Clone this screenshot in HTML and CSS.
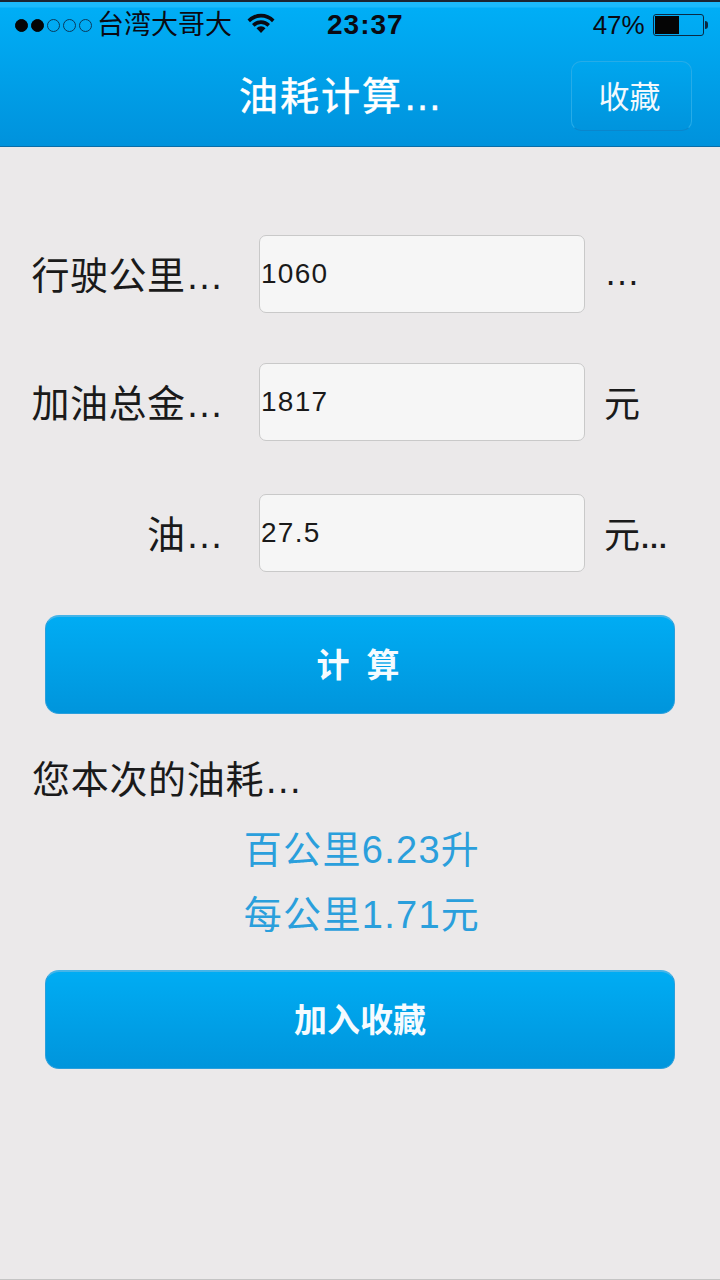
FILE: index.html
```html
<!DOCTYPE html>
<html lang="zh-CN">

<head>
    <meta charset="UTF-8">
    <meta name="viewport" content="width=device-width, initial-scale=1.0">
    <title>油耗计算</title>
    <link rel="stylesheet" href="styles.css">
</head>

<body>
    <header class="top-bar">
        <div class="status-bar">
            <div class="signal">
                <span class="dot full"></span>
                <span class="dot full"></span>
                <span class="dot"></span>
                <span class="dot"></span>
                <span class="dot"></span>
            </div>
            <span class="carrier">台湾大哥大</span>
            <svg class="wifi" width="28" height="20" viewBox="0 0 28 20">
                <path d="M0.5 6.5 A19 19 0 0 1 27.5 6.5 L25 9.2 A15.5 15.5 0 0 0 3 9.2 Z" fill="#0a0a12"/>
                <path d="M5 11 A12.5 12.5 0 0 1 23 11 L20.5 13.7 A9 9 0 0 0 7.5 13.7 Z" fill="#0a0a12"/>
                <path d="M9.5 15.2 A6.2 6.2 0 0 1 18.5 15.2 L14 20 Z" fill="#0a0a12"/>
            </svg>
            <span class="clock">23:37</span>
            <span class="percent">47%</span>
            <div class="battery"><div class="battery-level"></div></div>
            <div class="battery-tip"></div>
        </div>
        <div class="nav-bar">
            <h1 class="nav-title">油耗计算…</h1>
            <button class="fav-btn">收藏</button>
        </div>
    </header>

    <main class="content">
        <div class="form-row">
            <label class="row-label" for="distance">行驶公里…</label>
            <input class="row-input" id="distance" type="text" value="1060">
            <span class="row-unit">…</span>
        </div>
        <div class="form-row">
            <label class="row-label" for="total">加油总金…</label>
            <input class="row-input" id="total" type="text" value="1817">
            <span class="row-unit">元</span>
        </div>
        <div class="form-row last-row">
            <label class="row-label" for="price">油…</label>
            <input class="row-input" id="price" type="text" value="27.5">
            <span class="row-unit">元<span class="small-dots">…</span></span>
        </div>

        <button class="big-btn calc-btn">计 算</button>

        <div class="result-title">您本次的油耗…</div>
        <div class="result-line first-line">百公里6.23升</div>
        <div class="result-line">每公里1.71元</div>

        <button class="big-btn save-btn">加入收藏</button>
    </main>
</body>

</html>
```

FILE: styles.css
```css
body {
    font-family: "Liberation Sans", "Noto Sans CJK SC", sans-serif;
    background-color: #ebe9ea;
    margin: 0;
    height: 1280px;
    overflow: hidden;
    border-bottom: 1px solid #c4c4c4;
    box-sizing: border-box;
}
.top-bar {
    height: 147px;
    box-sizing: border-box;
    border-top: 2px solid #1c2530;
    border-bottom: 1px solid #0a6da8;
    background: linear-gradient(#1cbafa 0, #1cbafa 5px, #00aef6 6px, #0092dc 100%);
}
.status-bar {
    display: flex;
    align-items: center;
    height: 46px;
    padding-left: 15px;
    color: #0a0a12;
}
.signal {
    display: flex;
    gap: 3px;
}
.dot {
    width: 13px;
    height: 13px;
    box-sizing: border-box;
    border: 1px solid #0a3a5c;
    border-radius: 50%;
}
.dot.full {
    background-color: #050505;
    border-color: #050505;
}
.carrier {
    margin-left: 5px;
    font-size: 27px;
    line-height: 46px;
}
.wifi {
    margin-left: 15px;
    margin-bottom: 4px;
}
.clock {
    margin-left: 52px;
    font-size: 28px;
    font-weight: bold;
    letter-spacing: 1px;
}
.percent {
    margin-left: 189px;
    font-size: 26px;
}
.battery {
    margin-left: 8px;
    width: 51px;
    height: 22px;
    box-sizing: border-box;
    border: 1px solid #0a2a44;
    border-radius: 3px;
    padding: 1px;
}
.battery-level {
    width: 24px;
    height: 100%;
    background-color: #050505;
}
.battery-tip {
    width: 3px;
    height: 8px;
    margin-left: 1px;
    background-color: #0a2a44;
    border-radius: 0 3px 3px 0;
}
.nav-bar {
    display: flex;
    align-items: center;
    height: 98px;
    padding-left: 239px;
    padding-right: 28px;
}
.nav-title {
    margin: 0 auto 8px 0;
    font-size: 39px;
    font-weight: normal;
    letter-spacing: 2px;
    color: #ffffff;
    -webkit-text-stroke: 0.5px #ffffff;
}
.fav-btn {
    width: 121px;
    height: 70px;
    margin-bottom: 2px;
    padding: 0 4px 3px 0;
    font-family: inherit;
    font-size: 31px;
    color: #f2f9fd;
    background: linear-gradient(#00a6ee, #0094dd);
    border: 1px solid #26ace8;
    border-bottom-color: #0a86cc;
    border-radius: 10px;
}
.content {
    padding-top: 88px;
}
.form-row {
    display: flex;
    align-items: center;
    height: 78px;
    margin-bottom: 50px;
}
.form-row.last-row {
    margin-top: 53px;
    margin-bottom: 0;
}
.row-label {
    width: 224px;
    margin-right: 35px;
    padding-bottom: 4px;
    font-size: 38px;
    letter-spacing: 0.5px;
    color: #1a1a1a;
    text-align: right;
}
.row-input {
    width: 326px;
    height: 78px;
    box-sizing: border-box;
    padding: 0 0 0 1px;
    font-family: inherit;
    font-size: 28px;
    letter-spacing: 1.3px;
    color: #1a1a1a;
    background-color: #f6f6f6;
    border: 1px solid #c9c9c9;
    border-radius: 7px;
}
.row-unit {
    margin-left: 19px;
    padding-bottom: 2px;
    font-size: 36px;
    color: #1a1a1a;
}
.small-dots {
    font-size: 28px;
    font-weight: bold;
}
.big-btn {
    display: block;
    width: 630px;
    height: 99px;
    margin-left: 45px;
    padding: 0 0 4px;
    font-family: inherit;
    font-size: 33px;
    font-weight: bold;
    color: #f5fbff;
    background: linear-gradient(#00acf3, #0095dc);
    border: 1px solid #2a9fdc;
    border-top: 2px solid #45b4e8;
    border-radius: 14px;
}
.calc-btn {
    margin-top: 43px;
    letter-spacing: 4px;
}
.result-title {
    margin: 42px 0 0 32px;
    height: 48px;
    line-height: 48px;
    font-size: 38px;
    letter-spacing: 0.7px;
    color: #1a1a1a;
}
.result-line {
    height: 65px;
    padding-left: 4px;
    line-height: 65px;
    font-size: 38px;
    letter-spacing: 1.3px;
    color: #2a9fdc;
    text-align: center;
}
.first-line {
    margin-top: 14px;
}
.save-btn {
    margin-top: 22px;
}
```
